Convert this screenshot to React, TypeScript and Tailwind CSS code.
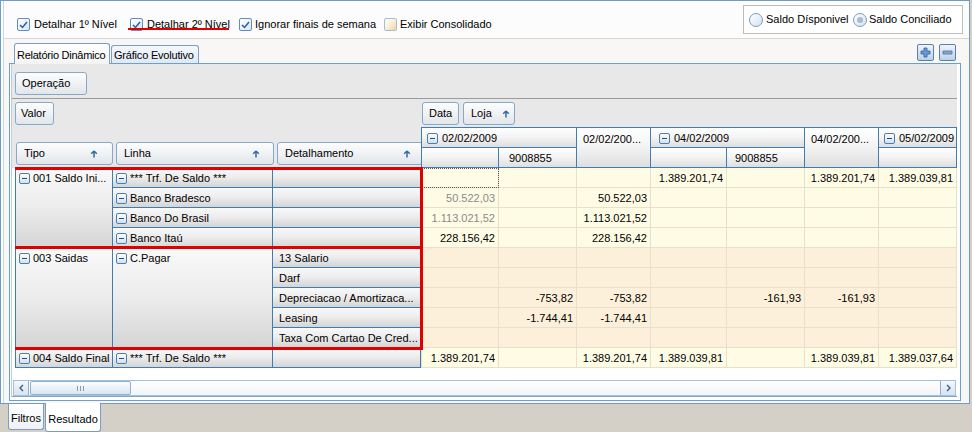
import React from 'react';

function MinusIcon() {
  return (
    <svg width="11" height="11" viewBox="0 0 11 11" className="shrink-0">
      <defs>
        <linearGradient id="mgrad" x1="0" y1="0" x2="0" y2="1">
          <stop offset="0" stopColor="#ffffff" />
          <stop offset="1" stopColor="#d3dfeb" />
        </linearGradient>
      </defs>
      <rect x="0.5" y="0.5" width="10" height="10" rx="1.5" fill="url(#mgrad)" stroke="#4d7fae" />
      <rect x="3" y="5" width="5" height="1" fill="#1f4f80" />
    </svg>
  );
}

function UpArrow() {
  return (
    <svg width="8" height="8" viewBox="0 0 8 8" className="shrink-0">
      <path d="M4 1 L1.2 3.8 M4 1 L6.8 3.8 M4 1.2 V7.5" stroke="#2d6ca8" strokeWidth="1.5" fill="none" />
    </svg>
  );
}

function Check({ checked, hover }: { checked?: boolean; hover?: boolean }) {
  return (
    <div
      className={
        hover
          ? 'w-[13px] h-[13px] shrink-0 rounded-[2px] border border-[#a8bcd2] bg-gradient-to-br from-[#fffdf8] via-[#fbeed6] to-[#f1d29e] flex items-center justify-center'
          : 'w-[13px] h-[13px] shrink-0 rounded-[2px] border border-[#5f8fbf] bg-gradient-to-br from-[#ffffff] to-[#dbe6f1] flex items-center justify-center'
      }
    >
      {checked && (
        <svg width="9" height="8" viewBox="0 0 9 8">
          <path d="M1 4 L3.5 6.5 L8 1" stroke="#2a5f9c" strokeWidth="1.5" fill="none" />
        </svg>
      )}
    </div>
  );
}

function Radio({ on }: { on?: boolean }) {
  return (
    <div className="w-[14px] h-[14px] shrink-0 rounded-full border border-[#7b9cc0] bg-gradient-to-br from-white to-[#d6e1ed] flex items-center justify-center">
      {on && <div className="w-[6px] h-[6px] rounded-full bg-[#a7bdd5]" />}
    </div>
  );
}

function PMBtn({ plus }: { plus?: boolean }) {
  return (
    <div className="w-[17px] h-[17px] rounded-[2px] border border-[#5582b3] bg-gradient-to-b from-[#eef4fc] to-[#bed1e8] flex items-center justify-center">
      <svg width="11" height="11" viewBox="0 0 11 11">
        {plus ? (
          <path d="M4 1h3v3h3v3H7v3H4V7H1V4h3z" fill="#6a9ad6" stroke="#2e5f9a" strokeWidth="0.8" />
        ) : (
          <path d="M1 4h9v3H1z" fill="#8ba7cb" stroke="#4b6f99" strokeWidth="0.8" />
        )}
      </svg>
    </div>
  );
}

const btn =
  'h-[23px] flex items-center rounded-[3px] border border-[#86a9c9] bg-gradient-to-b from-[#fdfdfd] to-[#e2e6ea] shrink-0';

const cellL =
  'border-r border-b border-[#3f7cb1] bg-gradient-to-b from-[#f9f9f9] via-[#ececec] to-[#d5d5d5] overflow-hidden whitespace-nowrap';

type Row = { p?: boolean; v: string[]; g?: number[] };

const rows: Row[] = [
  { v: ['', '', '', '1.389.201,74', '', '1.389.201,74', '1.389.039,81'] },
  { v: ['50.522,03', '', '50.522,03', '', '', '', ''], g: [0] },
  { v: ['1.113.021,52', '', '1.113.021,52', '', '', '', ''], g: [0] },
  { v: ['228.156,42', '', '228.156,42', '', '', '', ''] },
  { p: true, v: ['', '', '', '', '', '', ''] },
  { p: true, v: ['', '', '', '', '', '', ''] },
  { p: true, v: ['', '-753,82', '-753,82', '', '-161,93', '-161,93', ''] },
  { p: true, v: ['', '-1.744,41', '-1.744,41', '', '', '', ''] },
  { p: true, v: ['', '', '', '', '', '', ''] },
  { v: ['1.389.201,74', '', '1.389.201,74', '1.389.039,81', '', '1.389.039,81', '1.389.037,64'] },
];

function LCell({ text, icon, span }: { text?: string; icon?: boolean; span?: string }) {
  return (
    <div className={`${cellL} ${span ?? ''}`}>
      <div className="h-[19px] mt-[1px] flex items-center gap-[3px] pl-[3px]">
        {icon && <MinusIcon />}
        {text && <span>{text}</span>}
      </div>
    </div>
  );
}

function DCell({ text, span }: { text: string; span?: string }) {
  return (
    <div className={`${cellL} ${span ?? ''}`}>
      <div className="h-[19px] mt-[1px] flex items-center pl-[6px]">{text}</div>
    </div>
  );
}

const hdr =
  'border-r border-b border-[#3f7db2] bg-gradient-to-b from-[#ffffff] via-[#f3f3f3] to-[#dedede] overflow-hidden whitespace-nowrap';

export default function App() {
  return (
    <div className="w-[972px] h-[432px] bg-[#d4d0c8] text-[11px] leading-[13px] text-black font-['Liberation_Sans',Arial,sans-serif] relative overflow-hidden">
      <div className="w-[970px] h-[404px] border border-[#6f9bc4] bg-[#f8f7f5] flex flex-col shadow-[inset_2px_0_0_#ffffff,inset_3px_0_0_#c4d6e8]">
        {/* top options row */}
        <div className="h-[37px] shrink-0 flex justify-between items-start bg-[#fcfcfc] ml-[3px]">
          <div className="flex items-start pt-[17px] pl-[13px]">
            <div className="w-[113px] flex items-center gap-[4px]">
              <Check checked />
              <span>Detalhar 1º Nível</span>
            </div>
            <div className="w-[109px] flex items-center gap-[4px]">
              <Check checked />
              <span>Detalhar 2º Nível</span>
            </div>
            <div className="w-[145px] flex items-center gap-[3px]">
              <Check checked />
              <span>Ignorar finais de semana</span>
            </div>
            <div className="flex items-center gap-[3px]">
              <Check hover />
              <span>Exibir Consolidado</span>
            </div>
          </div>
          <div className="mt-[4px] mr-[6px] h-[29px] w-[220px] border border-[#bdbdbd] bg-white flex items-center pl-[5px]">
            <div className="w-[104px] flex items-center gap-[3px]">
              <Radio />
              <span>Saldo Dísponivel</span>
            </div>
            <div className="flex items-center gap-[2px]">
              <Radio on />
              <span>Saldo Conciliado</span>
            </div>
          </div>
        </div>
        <div className="h-px shrink-0 bg-[#d6d6d6] ml-[3px]" />
        {/* tabs row */}
        <div className="h-[24px] shrink-0 flex justify-between pl-[13px] pr-[13px]">
          <div className="flex items-end gap-[1px]">
            <div className="relative z-10 -mb-px h-[21px] w-[96px] rounded-t-[3px] border border-b-0 border-[#7aa0c5] bg-gradient-to-b from-[#ffffff] to-[#f4f4f4] flex items-center pl-[2px] pt-[2px] whitespace-nowrap tracking-[-0.25px]">
              Relatório Dinâmico
            </div>
            <div className="h-[18px] w-[88px] rounded-t-[3px] border border-b-0 border-[#7aa0c5] bg-gradient-to-b from-[#f4f8fc] to-[#dfe9f4] flex items-center pl-[2px] pt-[1px] whitespace-nowrap tracking-[-0.2px]">
              Gráfico Evolutivo
            </div>
          </div>
          <div className="flex gap-[5px] mt-[5px]">
            <PMBtn plus />
            <PMBtn />
          </div>
        </div>
        {/* panel */}
        <div className="ml-[8px] w-[952px] h-[338px] shrink-0 border border-[#6e9fcb] bg-white">
          <div className="ml-[1px] w-[946px] flex flex-col border-l border-[#b9cfe3]">
            {/* gray header area */}
            <div className="bg-[#e8e8e8]">
              <div className="h-[35px] pl-[3px] pt-[8px] border-b border-[#9c9c9c]">
                <div className={`${btn} w-[72px] h-[22px] pl-[6px]`}>Operação</div>
              </div>
              <div className="h-[28px] flex pt-[3px]">
                <div className="w-[409px] pl-[3px]">
                  <div className={`${btn} w-[39px] pl-[5px]`}>Valor</div>
                </div>
                <div className="flex gap-[4px] pl-[1px]">
                  <div className={`${btn} w-[37px] pl-[6px]`}>Data</div>
                  <div className={`${btn} w-[52px] pl-[7px] gap-[10px]`}>
                    <span>Loja</span>
                    <UpArrow />
                  </div>
                </div>
              </div>
              <div className="h-[41px] flex">
                <div className="w-[409px] pl-[4px] pt-[15px] flex gap-[3px]">
                  <div className={`${btn} w-[97px] pl-[7px] pr-[14px] justify-between`}>
                    <span>Tipo</span>
                    <UpArrow />
                  </div>
                  <div className={`${btn} w-[158px] pl-[7px] pr-[13px] justify-between`}>
                    <span>Linha</span>
                    <UpArrow />
                  </div>
                  <div className={`${btn} w-[146px] pl-[7px] pr-[11px] justify-between`}>
                    <span>Detalhamento</span>
                    <UpArrow />
                  </div>
                </div>
                <div className="grid grid-cols-[77px_78px_74px_76px_78px_74px_78px] grid-rows-[20px_20px] border-t border-l border-[#3f7db2]">
                  <div className={`${hdr} col-span-2 flex items-center gap-[4px] pl-[5px] pt-[1px]`}>
                    <MinusIcon />
                    <span>02/02/2009</span>
                  </div>
                  <div className={`${hdr} row-span-2 pl-[6px] pt-[5px]`}>02/02/200...</div>
                  <div className={`${hdr} col-span-2 flex items-center gap-[4px] pl-[8px] pt-[1px]`}>
                    <MinusIcon />
                    <span>04/02/2009</span>
                  </div>
                  <div className={`${hdr} row-span-2 pl-[6px] pt-[5px]`}>04/02/200...</div>
                  <div className={`${hdr} flex items-center gap-[4px] pl-[5px] pt-[1px]`}>
                    <MinusIcon />
                    <span>05/02/2009</span>
                  </div>
                  <div className={hdr} />
                  <div className={`${hdr} flex items-center pl-[10px] pt-[2px]`}>9008855</div>
                  <div className={hdr} />
                  <div className={`${hdr} flex items-center pl-[8px] pt-[2px]`}>9008855</div>
                  <div className={hdr} />
                </div>
              </div>
            </div>
            {/* data rows */}
            <div className="h-[200px] flex bg-white">
              <div className="w-[3px]" />
              <div className="grid grid-cols-[97px_160px_148px] grid-rows-[repeat(10,20px)] border-l border-[#3f7cb1] w-[406px]">
                <LCell span="row-span-4" icon text="001 Saldo Ini..." />
                <LCell icon text="*** Trf. De Saldo ***" />
                <LCell />
                <LCell icon text="Banco Bradesco" />
                <LCell />
                <LCell icon text="Banco Do Brasil" />
                <LCell />
                <LCell icon text="Banco Itaú" />
                <LCell />
                <LCell span="row-span-5" icon text="003 Saidas" />
                <LCell span="row-span-5" icon text="C.Pagar" />
                <DCell text="13 Salario" />
                <DCell text="Darf" />
                <DCell text="Depreciacao / Amortizaca..." />
                <DCell text="Leasing" />
                <DCell text="Taxa Com Cartao De Cred..." />
                <LCell icon text="004 Saldo Final" />
                <LCell icon text="*** Trf. De Saldo ***" />
                <LCell />
              </div>
              <div className="grid grid-cols-[77px_78px_74px_76px_78px_74px_78px] grid-rows-[repeat(10,20px)] border-l border-[#e4dcc6]">
                {rows.map((r, ri) =>
                  r.v.map((val, ci) => (
                    <div
                      key={`${ri}-${ci}`}
                      className={`${r.p ? 'bg-[#fdf0da]' : 'bg-[#fffce6]'} border-r border-b border-[#e8e0ca] flex items-center justify-end pr-[3px] pt-[2px] whitespace-nowrap ${
                        r.g && r.g.includes(ci) ? 'text-[#8a8a8a]' : 'text-black'
                      } ${ri === 0 && ci === 0 ? 'outline outline-1 outline-dotted outline-[#555] -outline-offset-1' : ''}`}
                    >
                      {val}
                    </div>
                  ))
                )}
              </div>
            </div>
            <div className="h-[12px] bg-white" />
            {/* scrollbar */}
            <div className="h-[16px] ml-[1px] w-[943px] flex border border-[#a3c0dc] bg-gradient-to-b from-[#ffffff] to-[#f1f5f9]">
              <div className="w-[15px] h-full border-r border-[#8fb0cf] bg-gradient-to-b from-[#f4f8fc] to-[#d6e3f0] flex items-center justify-center">
                <svg width="7" height="8" viewBox="0 0 7 8">
                  <path d="M5 1 L2 4 L5 7" stroke="#3a5f86" strokeWidth="1.4" fill="none" />
                </svg>
              </div>
              <div className="ml-[1px] w-[101px] h-full rounded-[2px] border border-[#8fb0cf] bg-gradient-to-b from-[#fbfcfe] to-[#dce6f0] flex items-center justify-center gap-[2px]">
                <div className="w-px h-[5px] bg-[#8a9cb0]" />
                <div className="w-px h-[5px] bg-[#8a9cb0]" />
                <div className="w-px h-[5px] bg-[#8a9cb0]" />
              </div>
              <div className="flex-1" />
              <div className="w-[15px] h-full border-l border-[#8fb0cf] bg-gradient-to-b from-[#f4f8fc] to-[#d6e3f0] flex items-center justify-center">
                <svg width="7" height="8" viewBox="0 0 7 8">
                  <path d="M2 1 L5 4 L2 7" stroke="#3a5f86" strokeWidth="1.4" fill="none" />
                </svg>
              </div>
            </div>
            <div className="h-px bg-[#7fa6cb]" />
          </div>
        </div>
      </div>
      {/* bottom tabs */}
      <div className="h-[28px] flex items-start pl-[8px] gap-[1px]">
        <div className="h-[26px] w-[36px] rounded-b-[3px] border border-t-0 border-[#7b9ebd] bg-gradient-to-b from-[#ffffff] to-[#eef2f6] flex items-center justify-center pt-[4px]">
          Filtros
        </div>
        <div className="-mt-px h-[29px] w-[56px] rounded-b-[3px] border border-t-0 border-[#7b9ebd] bg-white flex items-center justify-center pt-[5px]">
          Resultado
        </div>
      </div>
      {/* red annotations */}
      <div className="absolute left-[128px] top-[28px] w-[101px] h-[2px] bg-[#e00000]" />
      <div className="absolute left-[15px] top-[167px] w-[408px] h-[3px] bg-[#e00000]" />
      <div className="absolute left-[15px] top-[246px] w-[408px] h-[3px] bg-[#e00000]" />
      <div className="absolute left-[15px] top-[347px] w-[408px] h-[3px] bg-[#e00000]" />
      <div className="absolute left-[420px] top-[167px] w-[3px] h-[183px] bg-[#e00000]" />
    </div>
  );
}
